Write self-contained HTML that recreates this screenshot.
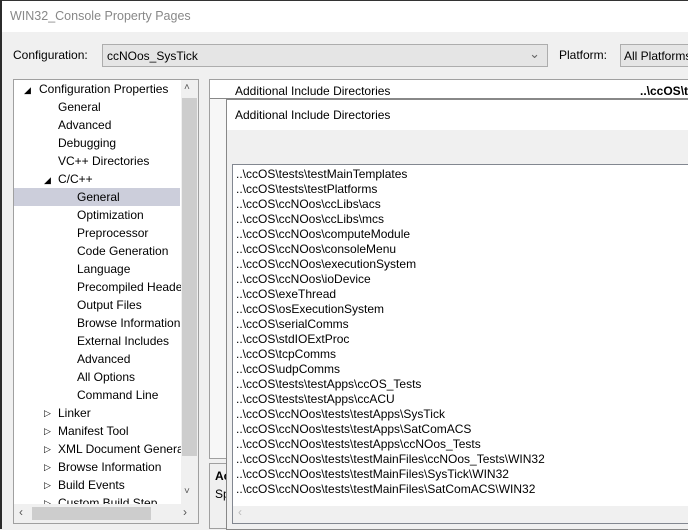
<!DOCTYPE html><html><head><style>
*{margin:0;padding:0;box-sizing:border-box}
body{width:688px;height:529px;overflow:hidden;background:#f0f0f0;font-family:"Liberation Sans",sans-serif;font-size:12px;color:#000;position:relative}
.a{position:absolute;white-space:nowrap}
.t{position:absolute;white-space:nowrap;line-height:18px}
.l{position:absolute;left:236px;white-space:nowrap;line-height:15px}
</style></head><body>
<div class="a" style="left:0;top:0;width:688px;height:32px;background:#fff;border-top:1px solid #333"></div>
<div class="a" style="left:0;top:0;width:2px;height:529px;background:#2b2b2b"></div>
<div class="a" style="left:10px;top:9px;color:#888;font-size:12.5px">WIN32_Console Property Pages</div>
<div class="a" style="left:13px;top:48px">Configuration:</div>
<div class="a" style="left:102px;top:44px;width:446px;height:23px;border:1px solid #adadad;background:#e5e5e5;padding:4px 4px">ccNOos_SysTick<span style="position:absolute;right:7px;top:1px;color:#666;font-size:13px">&#8964;</span></div>
<div class="a" style="left:559px;top:48px">Platform:</div>
<div class="a" style="left:620px;top:44px;width:80px;height:23px;border:1px solid #adadad;background:#e5e5e5;padding:4px 3px">All Platforms</div>
<!-- tree -->
<div class="a" style="left:13px;top:79px;width:186px;height:445px;border:1px solid #a0a0a0;background:#fff;overflow:hidden">
<div class="a" style="left:0;top:108px;width:166px;height:18px;background:#cccedb"></div>
<div class="t" style="left:10px;top:1px;font-size:9px">&#9698;</div>
<div class="t" style="left:25px;top:0">Configuration Properties</div>
<div class="t" style="left:44px;top:18px">General</div>
<div class="t" style="left:44px;top:36px">Advanced</div>
<div class="t" style="left:44px;top:54px">Debugging</div>
<div class="t" style="left:44px;top:72px">VC++ Directories</div>
<div class="t" style="left:30px;top:91px;font-size:9px">&#9698;</div>
<div class="t" style="left:44px;top:90px">C/C++</div>
<div class="t" style="left:63px;top:108px">General</div>
<div class="t" style="left:63px;top:126px">Optimization</div>
<div class="t" style="left:63px;top:144px">Preprocessor</div>
<div class="t" style="left:63px;top:162px">Code Generation</div>
<div class="t" style="left:63px;top:180px">Language</div>
<div class="t" style="left:63px;top:198px">Precompiled Headers</div>
<div class="t" style="left:63px;top:216px">Output Files</div>
<div class="t" style="left:63px;top:234px">Browse Information</div>
<div class="t" style="left:63px;top:252px">External Includes</div>
<div class="t" style="left:63px;top:270px">Advanced</div>
<div class="t" style="left:63px;top:288px">All Options</div>
<div class="t" style="left:63px;top:306px">Command Line</div>
<div class="t" style="left:30px;top:324px;font-size:9px">&#9655;</div><div class="t" style="left:44px;top:324px">Linker</div>
<div class="t" style="left:30px;top:342px;font-size:9px">&#9655;</div><div class="t" style="left:44px;top:342px">Manifest Tool</div>
<div class="t" style="left:30px;top:360px;font-size:9px">&#9655;</div><div class="t" style="left:44px;top:360px">XML Document Generator</div>
<div class="t" style="left:30px;top:378px;font-size:9px">&#9655;</div><div class="t" style="left:44px;top:378px">Browse Information</div>
<div class="t" style="left:30px;top:396px;font-size:9px">&#9655;</div><div class="t" style="left:44px;top:396px">Build Events</div>
<div class="t" style="left:30px;top:414px;font-size:9px">&#9655;</div><div class="t" style="left:44px;top:414px">Custom Build Step</div>
<div class="a" style="left:167px;top:0;width:17px;height:424px;background:#f0f0f0"></div>
<div class="a" style="left:168px;top:18px;width:15px;height:358px;background:#cdcdcd"></div>
<div class="a" style="left:170px;top:2px;color:#555;font-size:10px">&#708;</div>
<div class="a" style="left:170px;top:406px;color:#555;font-size:10px">&#709;</div>
<div class="a" style="left:0;top:424px;width:184px;height:19px;background:#f0f0f0"></div>
<div class="a" style="left:18px;top:427px;width:119px;height:13px;background:#cdcdcd"></div>
<div class="a" style="left:5px;top:425px;color:#555">&#8249;</div>
<div class="a" style="left:169px;top:425px;color:#555">&#8250;</div>
</div>
<!-- right grid -->
<div class="a" style="left:209px;top:79px;width:479px;height:380px;border:1px solid #a0a0a0;background:#f7f7f7"></div>
<div class="a" style="left:210px;top:80px;width:478px;height:19px;background:#fff;border-bottom:1px solid #888"></div>
<div class="a" style="left:235px;top:84px">Additional Include Directories</div>
<div class="a" style="left:640px;top:84px;font-weight:bold">..\ccOS\t</div>
<div class="a" style="left:209px;top:463px;width:20px;height:66px;border:1px solid #a0a0a0;background:#f0f0f0"></div>
<div class="a" style="left:215px;top:469px;font-weight:bold">Ac</div>
<div class="a" style="left:215px;top:487px">Sp</div>
<!-- dialog -->
<div class="a" style="left:226px;top:99px;width:463px;height:431px;border:1px solid #888;background:#f0f0f0"></div>
<div class="a" style="left:227px;top:100px;width:461px;height:30px;background:#fff"></div>
<div class="a" style="left:235px;top:108px">Additional Include Directories</div>
<div class="a" style="left:232px;top:164px;width:457px;height:360px;border:1px solid #828790;background:#fff"></div>
<div class="a" style="left:233px;top:506px;width:456px;height:17px;background:#f0f0f0"></div>
<div class="a" style="left:238px;top:505px;color:#bbb">&#8249;</div>
<div class="l" style="top:167px">..\ccOS\tests\testMainTemplates</div>
<div class="l" style="top:182px">..\ccOS\tests\testPlatforms</div>
<div class="l" style="top:197px">..\ccOS\ccNOos\ccLibs\acs</div>
<div class="l" style="top:212px">..\ccOS\ccNOos\ccLibs\mcs</div>
<div class="l" style="top:227px">..\ccOS\ccNOos\computeModule</div>
<div class="l" style="top:242px">..\ccOS\ccNOos\consoleMenu</div>
<div class="l" style="top:257px">..\ccOS\ccNOos\executionSystem</div>
<div class="l" style="top:272px">..\ccOS\ccNOos\ioDevice</div>
<div class="l" style="top:287px">..\ccOS\exeThread</div>
<div class="l" style="top:302px">..\ccOS\osExecutionSystem</div>
<div class="l" style="top:317px">..\ccOS\serialComms</div>
<div class="l" style="top:332px">..\ccOS\stdIOExtProc</div>
<div class="l" style="top:347px">..\ccOS\tcpComms</div>
<div class="l" style="top:362px">..\ccOS\udpComms</div>
<div class="l" style="top:377px">..\ccOS\tests\testApps\ccOS_Tests</div>
<div class="l" style="top:392px">..\ccOS\tests\testApps\ccACU</div>
<div class="l" style="top:407px">..\ccOS\ccNOos\tests\testApps\SysTick</div>
<div class="l" style="top:422px">..\ccOS\ccNOos\tests\testApps\SatComACS</div>
<div class="l" style="top:437px">..\ccOS\ccNOos\tests\testApps\ccNOos_Tests</div>
<div class="l" style="top:452px">..\ccOS\ccNOos\tests\testMainFiles\ccNOos_Tests\WIN32</div>
<div class="l" style="top:467px">..\ccOS\ccNOos\tests\testMainFiles\SysTick\WIN32</div>
<div class="l" style="top:482px">..\ccOS\ccNOos\tests\testMainFiles\SatComACS\WIN32</div>
</body></html>
